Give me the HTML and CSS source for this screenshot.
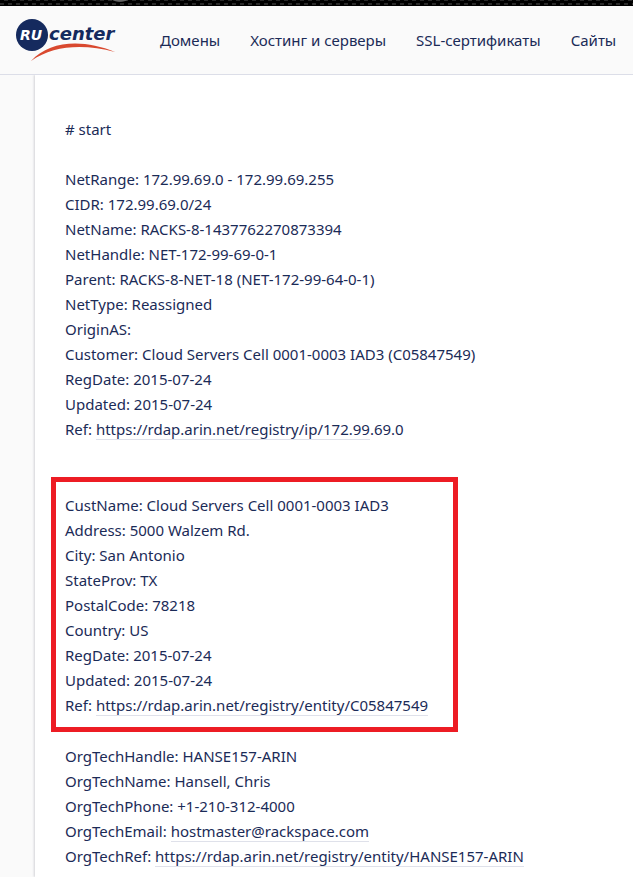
FILE: index.html
```html
<!DOCTYPE html>
<html lang="ru">
<head>
    <meta charset="UTF-8">
    <meta name="viewport" content="width=device-width, initial-scale=1.0">
    <title>RU-CENTER</title>
    <link rel="stylesheet" href="styles.css">
</head>
<body>
    <div class="strip"></div>
    <header class="header">
        <a class="logo" href="#" aria-label="RU center">
            <svg width="102" height="42" viewBox="0 0 102 42">
                <circle cx="16" cy="16" r="16" fill="#152a5e"/>
                <text class="logo-ru" x="4" y="21">RU</text>
                <text class="logo-center" x="33" y="21">center</text>
                <path d="M15 42 C34 21 68 20 99 33 C68 25 38 26 15 42 Z" fill="#d9492f"/>
            </svg>
        </a>
        <nav class="menu">
            <a href="#">Домены</a>
            <a href="#">Хостинг и серверы</a>
            <a href="#">SSL-сертификаты</a>
            <a href="#">Сайты</a>
        </nav>
    </header>
    <main class="content">
        <p># start</p>
        <p class="net">
            NetRange: 172.99.69.0 - 172.99.69.255<br>
            CIDR: 172.99.69.0/24<br>
            NetName: RACKS-8-1437762270873394<br>
            NetHandle: NET-172-99-69-0-1<br>
            Parent: RACKS-8-NET-18 (NET-172-99-64-0-1)<br>
            NetType: Reassigned<br>
            OriginAS:<br>
            Customer: Cloud Servers Cell 0001-0003 IAD3 (C05847549)<br>
            RegDate: 2015-07-24<br>
            Updated: 2015-07-24<br>
            Ref: <a href="#">https://rdap.arin.net/registry/ip/172.99</a>.69.0
        </p>
        <p class="customer">
            CustName: Cloud Servers Cell 0001-0003 IAD3<br>
            Address: 5000 Walzem Rd.<br>
            City: San Antonio<br>
            StateProv: TX<br>
            PostalCode: 78218<br>
            Country: US<br>
            RegDate: 2015-07-24<br>
            Updated: 2015-07-24<br>
            Ref: <a href="#">https://rdap.arin.net/registry/entity/C05847549</a>
        </p>
        <p>
            OrgTechHandle: HANSE157-ARIN<br>
            OrgTechName: Hansell, Chris<br>
            OrgTechPhone: +1-210-312-4000<br>
            OrgTechEmail: <a href="#">hostmaster@rackspace.com</a><br>
            OrgTechRef: <a href="#">https://rdap.arin.net/registry/entity/HANSE157-ARIN</a>
        </p>
    </main>
</body>
</html>
```
FILE: styles.css
```css
* {
    box-sizing: border-box;
}

body {
    margin: 0;
    min-height: 100vh;
    display: flex;
    flex-direction: column;
    background: #fafafa;
    color: #1b2b57;
    font: 15px/25px "Noto Sans", sans-serif;
}

.strip {
    height: 6px;
    background: radial-gradient(8px 2px at 120px 0, #666 0 70%, transparent) no-repeat,
                repeating-linear-gradient(90deg, #2a2a2a 0 4px, #000 4px 8px) 0 3px / 100% 2px no-repeat,
                repeating-linear-gradient(90deg, #000 0 4px, #2a2a2a 4px 8px) 0 0 / 100% 1px no-repeat #000;
}

.header {
    display: flex;
    align-items: center;
    height: 69px;
    padding-left: 16px;
    border-bottom: 1px solid #dcdee8;
}

.logo {
    display: flex;
}

.logo-ru {
    font: italic bold 14px "DejaVu Sans", sans-serif;
    fill: #fff;
}

.logo-center {
    font: italic bold 18px "DejaVu Sans", sans-serif;
    fill: #152a5e;
}

.menu {
    display: flex;
    gap: 30px;
    margin-left: 42px;
    white-space: nowrap;
}

.menu a {
    color: inherit;
    text-decoration: none;
}

.content {
    flex: 1;
    margin-left: 35px;
    padding: 42px 30px 0;
    background: #fff;
    box-shadow: -1px 0 2px #d4d4d8;
    clip-path: inset(0 0 0 -4px);
}

.content p {
    margin: 0;
}

.content a {
    color: inherit;
    text-decoration: none;
    border-bottom: 1px solid #dfe1ea;
}

.content .net {
    margin: 25px 0 35px;
}

/* selected record */
.content .customer {
    width: fit-content;
    margin: 0 0 12px -14px;
    padding: 11px 25px 9px 9px;
    border: 5px solid #ed1c24;
}
```
